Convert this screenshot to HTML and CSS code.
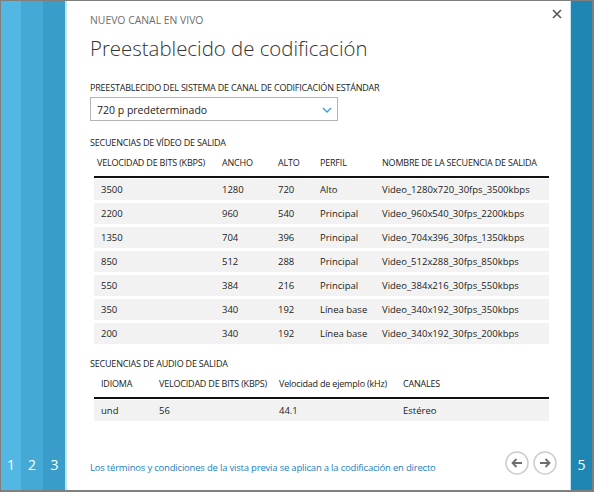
FILE: index.html
```html
<!DOCTYPE html>
<html lang="es">
<head>
<meta charset="utf-8">
<title>Preestablecido de codificación</title>
<link rel="stylesheet" href="styles.css">
</head>
<body>
<div class="frame">
  <div class="strip s1"><span class="num">1</span></div>
  <div class="strip s2"><span class="num">2</span></div>
  <div class="strip s3"><span class="num">3</span></div>
  <main class="panel">
    <button class="close" aria-label="Cerrar">
      <svg width="10" height="10" viewBox="0 0 10 10"><path d="M1 1L9 9M9 1L1 9" stroke="#555" stroke-width="1.6" fill="none"/></svg>
    </button>
    <div class="subtitle">NUEVO CANAL EN VIVO</div>
    <h1 class="title">Preestablecido de codificación</h1>
    <div class="label">PREESTABLECIDO DEL SISTEMA DE CANAL DE CODIFICACIÓN ESTÁNDAR</div>
    <div class="select">
      <span>720 p predeterminado</span>
      <svg width="10" height="6" viewBox="0 0 10 6"><path d="M1 1L5 5L9 1" stroke="#3a9ad9" stroke-width="1.3" fill="none"/></svg>
    </div>

    <div class="section">SECUENCIAS DE VÍDEO DE SALIDA</div>
    <div class="table video">
      <div class="row head">
        <div class="first">VELOCIDAD DE BITS (KBPS)</div><div>ANCHO</div><div>ALTO</div><div>PERFIL</div><div>NOMBRE DE LA SECUENCIA DE SALIDA</div>
      </div>
      <div class="row"><div>3500</div><div>1280</div><div>720</div><div>Alto</div><div>Video_1280x720_30fps_3500kbps</div></div>
      <div class="row"><div>2200</div><div>960</div><div>540</div><div>Principal</div><div>Video_960x540_30fps_2200kbps</div></div>
      <div class="row"><div>1350</div><div>704</div><div>396</div><div>Principal</div><div>Video_704x396_30fps_1350kbps</div></div>
      <div class="row"><div>850</div><div>512</div><div>288</div><div>Principal</div><div>Video_512x288_30fps_850kbps</div></div>
      <div class="row"><div>550</div><div>384</div><div>216</div><div>Principal</div><div>Video_384x216_30fps_550kbps</div></div>
      <div class="row"><div>350</div><div>340</div><div>192</div><div>Línea base</div><div>Video_340x192_30fps_350kbps</div></div>
      <div class="row"><div>200</div><div>340</div><div>192</div><div>Línea base</div><div>Video_340x192_30fps_200kbps</div></div>
    </div>

    <div class="section audio-title">SECUENCIAS DE AUDIO DE SALIDA</div>
    <div class="table audio">
      <div class="row head">
        <div>IDIOMA</div><div>VELOCIDAD DE BITS (KBPS)</div><div class="mixed">Velocidad de ejemplo (kHz)</div><div>CANALES</div>
      </div>
      <div class="row"><div>und</div><div>56</div><div>44.1</div><div>Estéreo</div></div>
    </div>

    <div class="footer">
      <a class="link" href="#">Los términos y condiciones de la vista previa se aplican a la codificación en directo</a>
      <div class="nav">
        <button class="circle" aria-label="Anterior">
          <svg width="24" height="24" viewBox="0 0 24 24"><circle cx="12" cy="12" r="11" stroke="#cdcdcd" stroke-width="1.5" fill="#fff"/><path d="M17 12H7.5M11.5 8L7.5 12L11.5 16" stroke="#6e6e6e" stroke-width="1.8" fill="none"/></svg>
        </button>
        <button class="circle" aria-label="Siguiente">
          <svg width="24" height="24" viewBox="0 0 24 24"><circle cx="12" cy="12" r="11" stroke="#cdcdcd" stroke-width="1.5" fill="#fff"/><path d="M7 12H16.5M12.5 8L16.5 12L12.5 16" stroke="#6e6e6e" stroke-width="1.8" fill="none"/></svg>
        </button>
      </div>
    </div>
  </main>
  <div class="strip right"><span class="num">5</span></div>
</div>
</body>
</html>
```

FILE: styles.css
```css
* { box-sizing: border-box; }
html, body { margin: 0; padding: 0; background: #fff; }
body {
  font-family: "Open Sans", "Noto Sans", "Liberation Sans", sans-serif;
  color: #222;
}
.frame {
  width: 594px;
  height: 492px;
  border-style: solid;
  border-color: #7f7f7f;
  border-width: 1px 2px 2px 1px;
  display: flex;
}
.strip {
  display: flex;
  flex-direction: column;
  justify-content: flex-end;
  align-items: center;
  padding-bottom: 15px;
  color: #fff;
}
.num { font-size: 14px; line-height: 20px; }
.s1 { width: 20px; background: #52b7e3; }
.s2 { width: 22px; background: #45a9d6; }
.s3 { width: 24px; background: #3a9cc8; border-right: 2px solid #c7e4f2; padding-left: 1px; }
.right { width: 22px; background: #1f86b3; border-left: 1px solid #c7e4f2; }

.panel {
  flex: 1;
  position: relative;
  display: flex;
  flex-direction: column;
  padding: 12px 21px 15px 23px;
}
.close {
  position: absolute;
  top: 8px;
  right: 8px;
  width: 10px;
  height: 10px;
  padding: 0;
  border: 0;
  background: none;
  display: flex;
}
.subtitle {
  font-size: 10.4px;
  line-height: 14px;
  color: #6d6d6d;
}
.title {
  margin: 6px 0 0;
  font-size: 20.4px;
  font-weight: 300;
  line-height: 30px;
  color: #333;
}
.label {
  margin-top: 18px;
  font-size: 9px;
  letter-spacing: -0.2px;
  line-height: 14px;
  color: #222;
}
.select {
  margin-top: 2px;
  width: 248px;
  height: 24px;
  border: 1px solid #b4b4b4;
  display: flex;
  align-items: center;
  justify-content: space-between;
  padding: 2px 5px 0 6px;
  font-size: 10.5px;
  color: #222;
}
.section {
  margin-top: 15px;
  font-size: 9px;
  letter-spacing: -0.2px;
  line-height: 14px;
  color: #222;
}
.table {
  margin-left: 4px;
  width: 455px;
  display: flex;
  flex-direction: column;
  gap: 3px;
}
.row {
  display: grid;
  height: 21px;
  align-items: center;
  background: #f2f2f2;
  font-size: 9.5px;
  color: #222;
}
.row > div { padding-left: 7px; white-space: nowrap; }
.row.head {
  height: 26px;
  margin-top: 2px;
  padding-bottom: 4px;
  background: none;
  border-bottom: 2px solid #111;
  margin-bottom: -2px;
  font-size: 9px;
  letter-spacing: -0.2px;
}
.video .row { grid-template-columns: 121px 56px 42px 62px 174px; }
.video .head .first { padding-left: 3px; }
.audio .row { grid-template-columns: 58px 120px 124px 153px; }
.audio-title { margin-top: 13px; }

.footer {
  margin-top: auto;
  display: flex;
  align-items: flex-end;
  justify-content: space-between;
}
.link {
  font-size: 9.5px;
  letter-spacing: -0.2px;
  line-height: 14px;
  color: #1a7fc3;
  text-decoration: none;
}
.nav { display: flex; gap: 4px; margin-right: -8px; }
.circle {
  width: 24px;
  height: 24px;
  padding: 0;
  border: 0;
  background: none;
  display: flex;
}
```
